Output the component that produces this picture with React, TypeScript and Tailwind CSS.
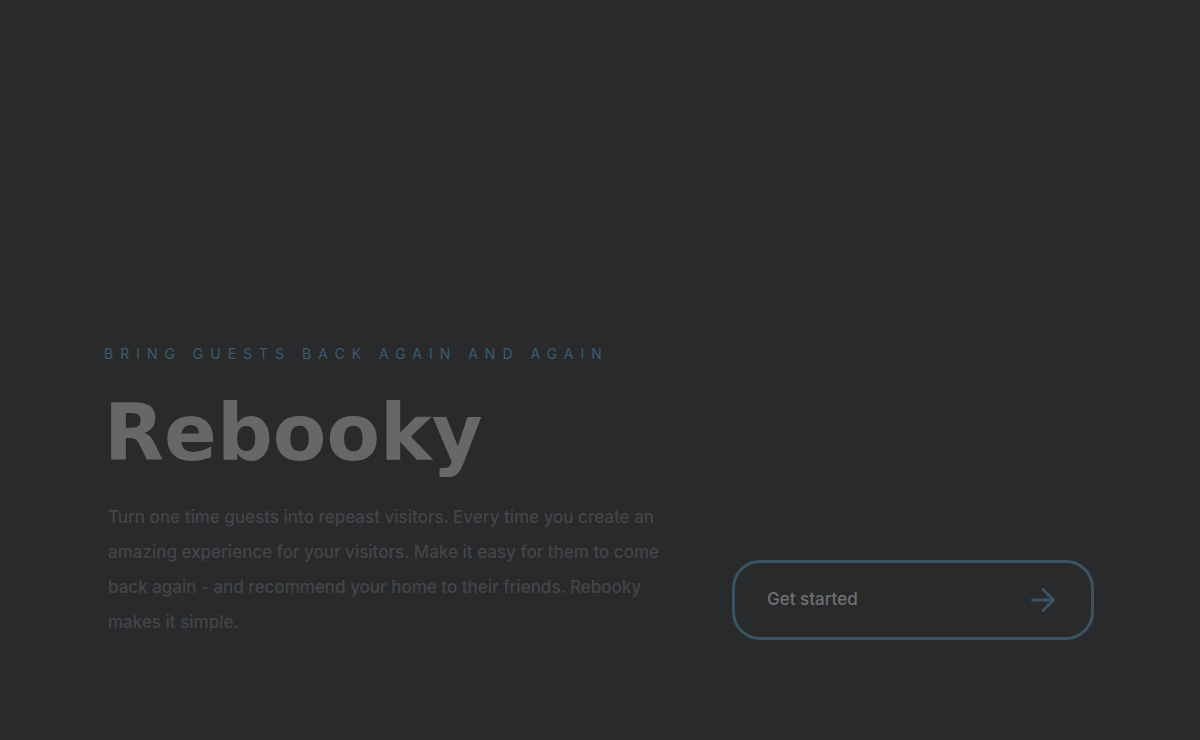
import { ArrowRight } from "lucide-react";

export default function App() {
  return (
    <main className="flex min-h-screen items-end justify-between gap-15 bg-[#292a2c] pt-24 pr-[106px] pb-25 pl-27 font-['Inter',sans-serif] font-medium">
      <div className="flex-1">
        <p className="-ml-1 text-sm font-normal tracking-[7px] text-[#3a5c71] uppercase">
          Bring guests back again and again
        </p>
        <h1 className="mt-6 -ml-1 font-['DejaVu_Sans',sans-serif] text-[78px] leading-[90px] font-bold text-[#666768]">
          Rebooky
        </h1>
        <p className="mt-5.5 text-[17px] leading-[35px] text-[#444547]">
          Turn one time guests into repeast visitors. Every time you create an
          amazing experience for your visitors. Make it easy for them to come
          back again - and recommend your home to their friends. Rebooky makes
          it simple.
        </p>
      </div>
      <button
        type="button"
        className="flex h-20 w-[362px] items-center justify-between rounded-[28px] border-3 border-[#3b5362] pr-7.5 pl-8 text-[17px] text-[#6f7071]"
      >
        Get started
        <ArrowRight className="size-9 text-[#3b5362]" />
      </button>
    </main>
  );
}
